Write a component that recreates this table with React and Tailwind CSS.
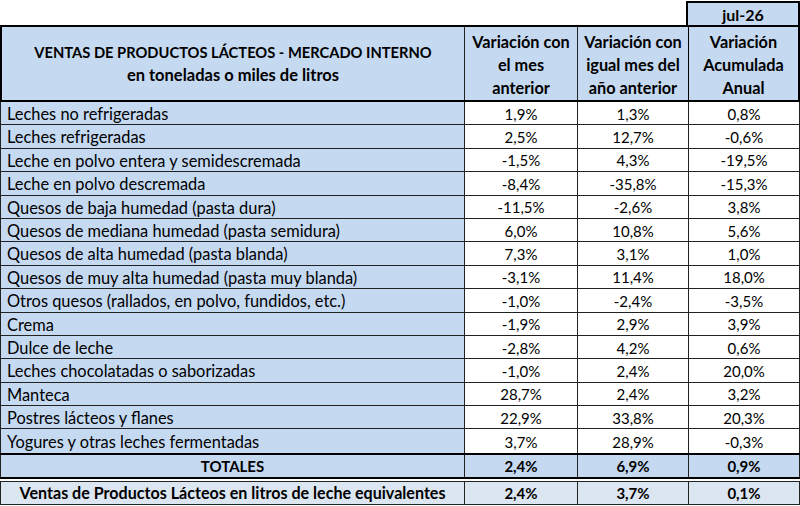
import React from "react";

const rows = [
  ["Leches no refrigeradas", "1,9%", "1,3%", "0,8%"],
  ["Leches refrigeradas", "2,5%", "12,7%", "-0,6%"],
  ["Leche en polvo entera y semidescremada", "-1,5%", "4,3%", "-19,5%"],
  ["Leche en polvo descremada", "-8,4%", "-35,8%", "-15,3%"],
  ["Quesos de baja humedad (pasta dura)", "-11,5%", "-2,6%", "3,8%"],
  ["Quesos de mediana humedad (pasta semidura)", "6,0%", "10,8%", "5,6%"],
  ["Quesos de alta humedad (pasta blanda)", "7,3%", "3,1%", "1,0%"],
  ["Quesos de muy alta humedad (pasta muy blanda)", "-3,1%", "11,4%", "18,0%"],
  ["Otros quesos (rallados, en polvo, fundidos, etc.)", "-1,0%", "-2,4%", "-3,5%"],
  ["Crema", "-1,9%", "2,9%", "3,9%"],
  ["Dulce de leche", "-2,8%", "4,2%", "0,6%"],
  ["Leches chocolatadas o saborizadas", "-1,0%", "2,4%", "20,0%"],
  ["Manteca", "28,7%", "2,4%", "3,2%"],
  ["Postres lácteos y flanes", "22,9%", "33,8%", "20,3%"],
  ["Yogures y otras leches fermentadas", "3,7%", "28,9%", "-0,3%"],
];

const cols = "grid grid-cols-[464px_113px_111px_112px]";

export default function App() {
  return (
    <div className="w-[800px] h-[506px] bg-white text-black font-['Lato','Open_Sans',sans-serif] text-[15px] leading-none">
      {/* fecha */}
      <div className="flex justify-end h-[25px] pt-[1px]">
        <div className="w-[114px] h-[24px] border-2 border-b-0 border-black bg-[#c5d9f1] flex items-center justify-center pt-[1px] font-bold text-[16px]">
          jul-26
        </div>
      </div>

      {/* encabezado */}
      <div className={`${cols} h-[77px] border-y-2 border-black bg-[#c5d9f1] font-bold`}>
        <div className="border-l-2 border-black flex flex-col items-center justify-center gap-[7px] pt-[1px]">
          <span className="text-[14.7px]">VENTAS DE PRODUCTOS LÁCTEOS - MERCADO INTERNO</span>
          <span className="text-[16.5px]">en toneladas o miles de litros</span>
        </div>
        <div className="border-l border-[#222] flex flex-col items-center justify-end pb-[1px] leading-[23px] text-center text-[16.3px]">
          <span>Variación con</span>
          <span>el mes</span>
          <span>anterior</span>
        </div>
        <div className="border-l border-[#222] flex flex-col items-center justify-end pb-[1px] leading-[23px] text-center text-[16.3px]">
          <span>Variación con</span>
          <span>igual mes del</span>
          <span>año anterior</span>
        </div>
        <div className="border-l border-r-2 border-black flex flex-col items-center justify-end pb-[1px] leading-[23px] text-center text-[16.3px]">
          <span>Variación</span>
          <span>Acumulada</span>
          <span>Anual</span>
        </div>
      </div>

      {/* filas */}
      {rows.map((r, i) => (
        <div
          key={r[0]}
          className={`${cols} h-[23.4px] ${i < rows.length - 1 ? "border-b border-[#222]" : ""}`}
        >
          <div className="border-l border-[#222] bg-[#c5d9f1] flex items-center pl-[6px] pt-[2px] text-[16.4px]">{r[0]}</div>
          <div className="border-l border-[#222] flex items-center justify-center pt-[2px]">{r[1]}</div>
          <div className="border-l border-[#222] flex items-center justify-center pt-[2px]">{r[2]}</div>
          <div className="border-l border-r border-[#222] flex items-center justify-center pt-[2px]">{r[3]}</div>
        </div>
      ))}

      {/* totales */}
      <div className={`${cols} h-[26px] border-y-2 border-black bg-[#c5d9f1] font-bold`}>
        <div className="border-l border-[#222] flex items-center justify-center pt-[1px]">TOTALES</div>
        <div className="border-l border-[#222] flex items-center justify-center pt-[1px]">2,4%</div>
        <div className="border-l border-[#222] flex items-center justify-center pt-[1px]">6,9%</div>
        <div className="border-l border-r border-[#222] flex items-center justify-center pt-[1px]">0,9%</div>
      </div>

      {/* litros equivalentes */}
      <div className={`${cols} h-[24px] mt-[2px] border-y border-[#222] bg-[#dce6f1] font-bold`}>
        <div className="border-l border-[#222] flex items-center justify-center pt-[1px] text-[16.1px]">
          Ventas de Productos Lácteos en litros de leche equivalentes
        </div>
        <div className="border-l border-[#222] flex items-center justify-center pt-[1px]">2,4%</div>
        <div className="border-l border-[#222] flex items-center justify-center pt-[1px]">3,7%</div>
        <div className="border-l border-r border-[#222] flex items-center justify-center pt-[1px]">0,1%</div>
      </div>
    </div>
  );
}
